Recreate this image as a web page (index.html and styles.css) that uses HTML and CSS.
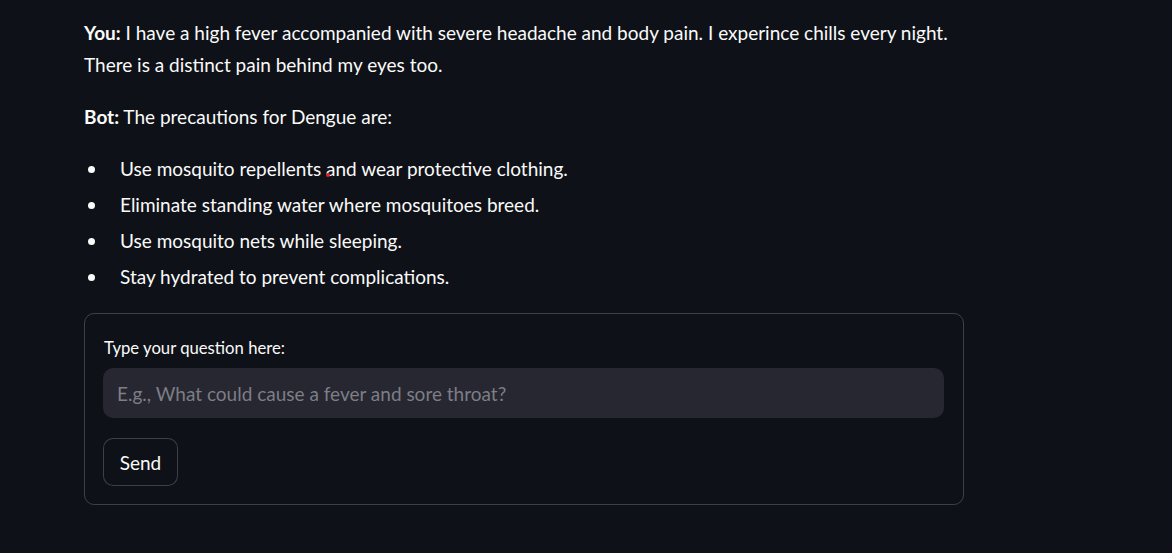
FILE: index.html
```html
<!DOCTYPE html>
<html lang="en">
<head>
<meta charset="utf-8">
<title>Chat</title>
<link rel="stylesheet" href="styles.css">
</head>
<body>
<main class="main">
  <p class="msg"><strong>You:</strong> I have a high fever accompanied with severe headache and body pain. I experince chills every night. There is a distinct pain behind my eyes too.</p>
  <p class="msg"><strong>Bot:</strong> The precautions for Dengue are:</p>
  <ul class="list">
    <li>Use mosquito repellents <span class="dot-wrap"><span class="dot"></span></span>and wear protective clothing.</li>
    <li>Eliminate standing water where mosquitoes breed.</li>
    <li>Use mosquito nets while sleeping.</li>
    <li>Stay hydrated to prevent complications.</li>
  </ul>
  <form class="form">
    <label class="label" for="q">Type your question here:</label>
    <input class="input" id="q" type="text" placeholder="E.g., What could cause a fever and sore throat?">
    <button class="btn" type="button">Send</button>
  </form>
</main>
</body>
</html>
```
FILE: styles.css
```css
html, body {
  margin: 0;
  padding: 0;
  background: #0e1117;
  color: #fafafa;
  font-family: Lato, "Noto Sans", sans-serif;
  font-size: 19px;
}
.main {
  width: 880px;
  margin-left: 84px;
  padding-top: 17px;
}
.msg {
  margin: 0 0 20px 0;
  line-height: 32px;
  width: 880px;
}
.msg strong { font-weight: 700; }
.list {
  margin: 0 0 20px 0;
  padding-left: 36px;
  line-height: 32px;
  list-style: none;
}
.list li {
  position: relative;
  margin-bottom: 4px;
}
.list li::before {
  content: "";
  position: absolute;
  left: -32px;
  top: 13px;
  width: 7px;
  height: 7px;
  border-radius: 50%;
  background: #fafafa;
}
.list li:last-child { margin-bottom: 0; }
.dot-wrap {
  position: relative;
}
.dot {
  position: absolute;
  left: 0px;
  top: 16px;
  width: 4px;
  height: 4px;
  border-radius: 50%;
  background: #e0202a;
}
.form {
  display: flex;
  flex-direction: column;
  align-items: flex-start;
  border: 1px solid rgba(250,250,250,0.2);
  border-radius: 10px;
  padding: 19px 19px 18px 18px;
  box-sizing: border-box;
  width: 880px;
}
.label {
  font-size: 16.7px;
  line-height: 28px;
  margin: 0 0 6px 1px;
  padding-top: 1px;
}
.input {
  box-sizing: border-box;
  width: 841px;
  height: 50px;
  border: none;
  border-radius: 10px;
  background: #262730;
  color: #fafafa;
  font-family: inherit;
  font-size: 19px;
  padding: 0 14px;
  outline: none;
  margin: 0 0 20px 0;
}
.input::placeholder { color: #7d7e86; }
.btn {
  box-sizing: border-box;
  height: 48px;
  width: 75px;
  border: 1px solid rgba(250,250,250,0.2);
  border-radius: 10px;
  background: #0e1117;
  color: #fafafa;
  font-family: inherit;
  font-size: 19px;
  padding: 0;
}
```
